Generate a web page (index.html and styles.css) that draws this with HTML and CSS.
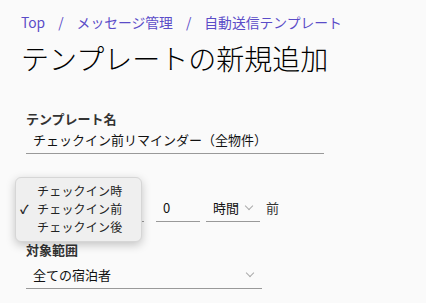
FILE: index.html
```html
<!DOCTYPE html>
<html lang="ja">
<head>
  <meta charset="UTF-8">
  <title>テンプレートの新規追加</title>
  <link rel="stylesheet" href="styles.css">
</head>
<body>
  <div class="page">
    <nav class="crumbs">
      <a href="#">Top</a>
      <span class="sep">/</span>
      <a href="#">メッセージ管理</a>
      <span class="sep">/</span>
      <a href="#">自動送信テンプレート</a>
    </nav>
    <h1>テンプレートの新規追加</h1>

    <form class="form">
      <div class="field">
        <label>テンプレート名</label>
        <div class="input wide">チェックイン前リマインダー（全物件）</div>
      </div>

      <div class="timing">
        <!-- select is covered by its open popup -->
        <div class="input timing-select" aria-label="チェックイン前"></div>
        <div class="input num">0</div>
        <div class="input unit">時間<span class="chev"></span></div>
        <span class="suffix">前</span>

        <ul class="menu">
          <li>チェックイン時</li>
          <li class="checked">チェックイン前</li>
          <li>チェックイン後</li>
        </ul>
      </div>

      <div class="field scope-field">
        <label>対象範囲</label>
        <div class="input scope">全ての宿泊者<span class="chev"></span></div>
      </div>
    </form>
  </div>
</body>
</html>
```

FILE: styles.css
```css
* {
  margin: 0;
  padding: 0;
  box-sizing: border-box;
}

body {
  background: #fafafa;
  font-family: 'Noto Sans CJK JP', 'Noto Sans', sans-serif;
  color: #111;
}

.page {
  padding: 12px 21px;
}

.crumbs {
  font-size: 13.8px;
  line-height: 20px;
  display: flex;
  align-items: center;
}

.crumbs a {
  color: #5a4cc8;
  text-decoration: none;
}

.crumbs .sep {
  color: #5a4cc8;
  margin: 0 13px;
}

h1 {
  font-size: 28px;
  font-weight: 300;
  line-height: 40px;
  margin-top: 6px;
  color: #000;
}

.form {
  padding-left: 5px;
  margin-top: 32px;
}

.field label {
  display: block;
  font-size: 13px;
  font-weight: bold;
  color: #333;
  line-height: 18px;
}

.input {
  font-size: 13px;
  line-height: 20px;
  min-height: 25px;
  padding: 2px 7px 3px;
  border-bottom: 1.5px solid #999;
  display: flex;
  align-items: center;
  white-space: nowrap;
  flex-shrink: 0;
}

.wide {
  width: 298px;
}

.timing {
  position: relative;
  display: flex;
  align-items: flex-end;
  margin-top: 42px;
  height: 26px;
}

.timing-select {
  width: 118px;
}

.num {
  width: 44px;
  margin-left: 12px;
}

.unit {
  width: 54px;
  margin-left: 6px;
  padding-right: 4px;
}

.suffix {
  font-size: 13px;
  margin-left: 6px;
  padding-bottom: 5px;
  color: #333;
}

.chev {
  margin-left: auto;
  width: 6px;
  height: 6px;
  border-right: 1px solid #aaa;
  border-bottom: 1px solid #aaa;
  transform: rotate(45deg);
  margin-top: -4px;
  margin-right: 2px;
}

.unit .chev {
  margin-left: 7px;
}

.menu {
  position: absolute;
  left: -11px;
  top: -19px;
  width: 127px;
  list-style: none;
  background: #efefef;
  border-radius: 6px;
  border: 1px solid #d6d6d6;
  box-shadow: 0 3px 10px rgba(0, 0, 0, 0.22);
  padding: 4px 0 5px;
  font-size: 12px;
  line-height: 18px;
  letter-spacing: 0.2px;
  color: #222;
}

.menu li {
  padding-left: 21px;
  position: relative;
}

.menu li.checked::before {
  content: '\2713';
  position: absolute;
  left: 4px;
  font-weight: bold;
}

.scope-field {
  margin-top: 19px;
}

.scope {
  width: 236px;
  margin-top: 4px;
}
```
